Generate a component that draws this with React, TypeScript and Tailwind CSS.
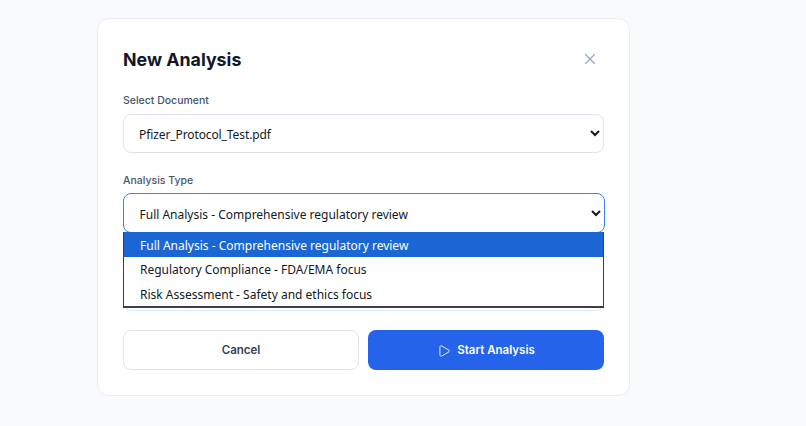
import { Play, X } from 'lucide-react';

const OPTIONS = [
  'Full Analysis - Comprehensive regulatory review',
  'Regulatory Compliance - FDA/EMA focus',
  'Risk Assessment - Safety and ethics focus',
];

const selectFont = "[font-family:'Noto_Sans',sans-serif]";

export default function App() {
  return (
    <div className="h-[426px] w-[806px] overflow-hidden bg-[#f8fafc] pl-[97px] pt-[18px] [font-family:Inter,sans-serif]">
      <div className="h-[378px] w-[533px] rounded-xl border border-[#e9edf3] bg-white pl-[25px] pr-[25px] pt-[25px]">
        <div className="flex h-[32px] items-center justify-between">
          <h2 className="text-[17.8px] font-bold text-[#0f172a]">New Analysis</h2>
          <button className="mb-[2px] mr-[5px] text-[#94a3b8]"><X size={18} strokeWidth={1.5} /></button>
        </div>

        <label className="mt-[17px] block h-[15px] text-[10.5px] leading-[15px] font-medium text-[#475569]">Select Document</label>
        <select className={`mt-[6px] block h-[39px] w-full rounded-lg border border-[#dfe3ec] bg-white pl-[11px] pr-[4px] pt-[2px] text-[12px] tracking-[-0.1px] text-[#111827] ${selectFont}`}>
          <option>Pfizer_Protocol_Test.pdf</option>
        </select>

        <label className="mt-[20px] block h-[15px] text-[10.5px] leading-[15px] font-medium text-[#475569]">Analysis Type</label>
        <div className="relative mt-[5px]">
          <select className={`block h-[40px] w-[482px] rounded-lg border-[1.5px] border-[#3b82f6] bg-white pl-[11.5px] pr-[4px] pt-[2px] text-[12px] text-[#111827] ${selectFont}`}>
            <option>{OPTIONS[0]}</option>
          </select>
          <div className={`absolute left-0 top-[39px] z-10 w-[481px] border border-t-0 border-[#3f3f46] border-b-2 bg-white text-[12px] ${selectFont}`}>
            {OPTIONS.map((o, i) => (
              <div key={o} className={`flex h-[24.5px] items-center pl-[16px] pt-[3px] ${i === 0 ? 'bg-[#1a66d2] text-white' : 'text-[#111827]'}`}>{o}</div>
            ))}
          </div>
        </div>

        {/* field hidden behind the open list */}
        <div className="mt-[38px] h-[40px] w-[481px] rounded-lg border border-[#dbe7f3] bg-white" />

        <div className="mt-[19px] flex gap-[9px]">
          <button className="h-[40px] w-[236px] rounded-lg border border-[#dfe3ec] bg-white pt-[2px] text-[11.5px] font-semibold text-[#334155]">Cancel</button>
          <button className="flex h-[40px] w-[236px] items-center justify-center gap-[6px] rounded-lg bg-[#2563eb] pt-[2px] text-[11.5px] font-semibold text-white">
            <Play size={14} strokeWidth={1.5} />
            Start Analysis
          </button>
        </div>
      </div>
    </div>
  );
}
